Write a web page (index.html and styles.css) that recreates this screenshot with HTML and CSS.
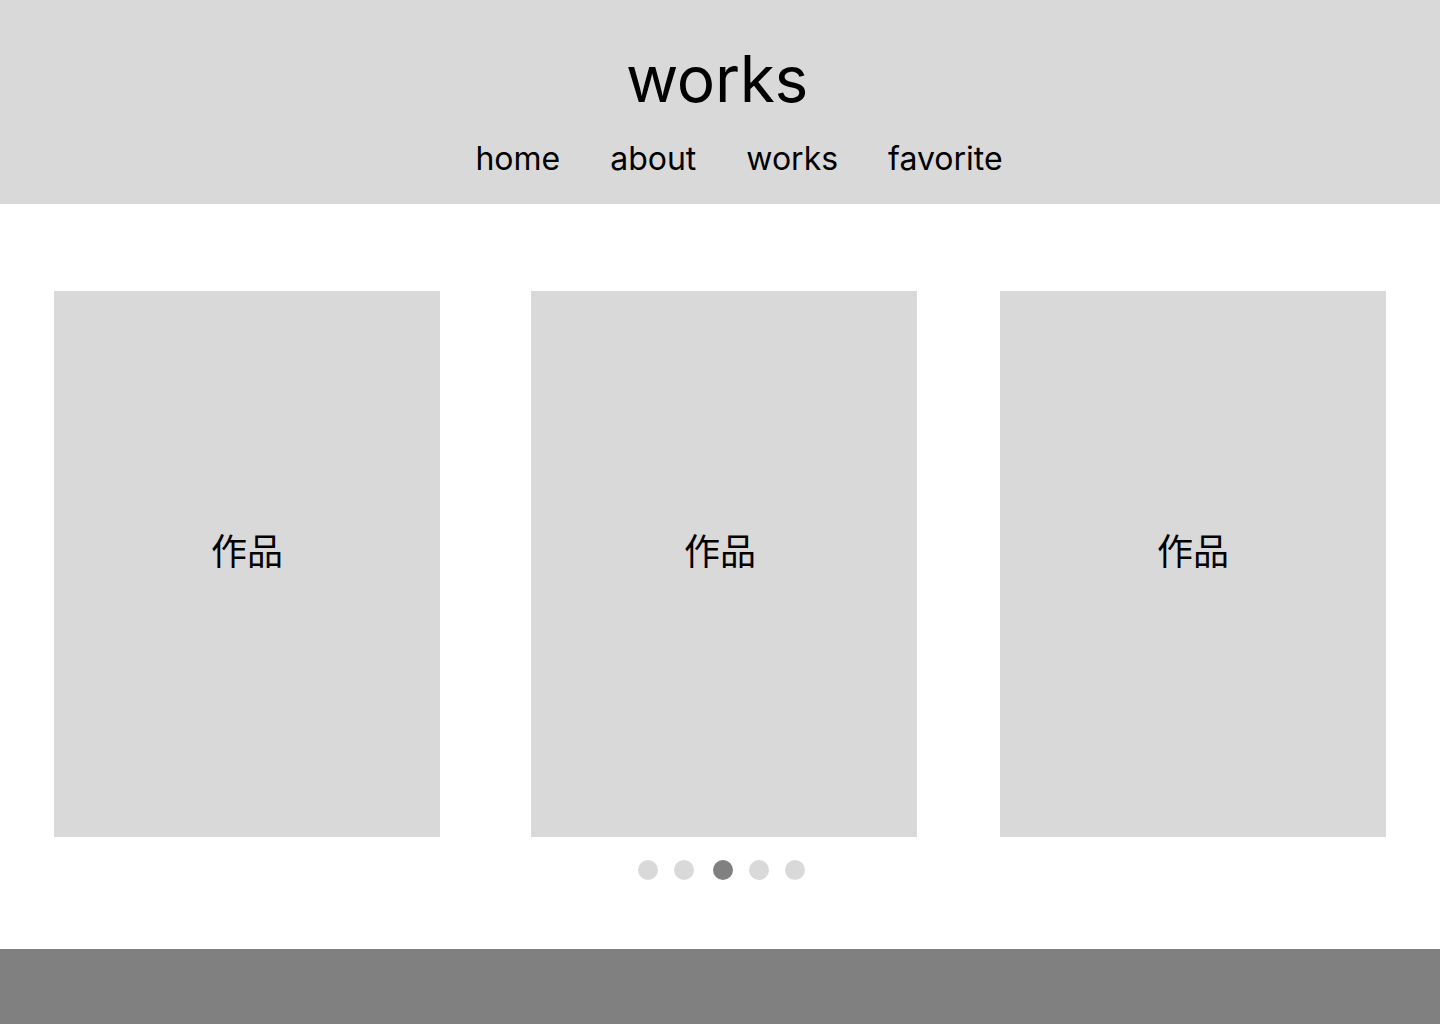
FILE: index.html
```html
<!DOCTYPE html>
<html lang="ja">
<head>
    <meta charset="UTF-8">
    <meta name="viewport" content="width=device-width, initial-scale=1.0">
    <title>works</title>
    <link rel="stylesheet" href="styles.css">
</head>
<body>
    <header class="header">
        <h1 class="title">works</h1>
        <nav class="nav">
            <a href="#">home</a>
            <a href="#">about</a>
            <a href="#">works</a>
            <a href="#">favorite</a>
        </nav>
    </header>
    <main class="content">
        <div class="cards">
            <div class="card">作品</div>
            <div class="card">作品</div>
            <div class="card">作品</div>
        </div>
        <div class="dots">
            <span class="dot"></span>
            <span class="dot"></span>
            <span class="dot active"></span>
            <span class="dot"></span>
            <span class="dot"></span>
        </div>
    </main>
    <footer class="footer"></footer>
</body>
</html>
```

FILE: styles.css
```css
body {
    font-family: 'Inter', 'Noto Sans CJK JP', sans-serif;
    background-color: #FFFFFF;
    color: #000;
    margin: 0;
    padding: 0;
}
.header {
    background-color: #D9D9D9;
    height: 204px;
    box-sizing: border-box;
    padding-top: 40px;
    text-align: center;
}
.title {
    margin: 0;
    padding-right: 6px;
    font-size: 64px;
    font-weight: 400;
    line-height: 77px;
    letter-spacing: -0.3px;
}
.nav {
    display: flex;
    justify-content: center;
    gap: 50px;
    margin-top: 22px;
    padding-left: 38px;
}
.nav a {
    font-size: 32px;
    line-height: 39px;
    color: #000;
    text-decoration: none;
}
.content {
    height: 745px;
    box-sizing: border-box;
    padding: 87px 54px 0;
}
.cards {
    display: flex;
}
.card {
    flex-shrink: 0;
    width: 386px;
    height: 546px;
    background-color: #D9D9D9;
    display: flex;
    align-items: center;
    justify-content: center;
    box-sizing: border-box;
    padding-bottom: 31px;
    font-family: 'Noto Sans CJK JP', sans-serif;
    font-size: 36px;
}
.card:nth-child(2) {
    margin-left: 91px;
    padding-right: 8px;
}
.card:last-child {
    margin-left: auto;
}
.dots {
    display: flex;
    justify-content: center;
    gap: 16px;
    margin-top: 23px;
    padding-left: 2px;
}
.dot {
    width: 20px;
    height: 20px;
    border-radius: 50%;
    background-color: #D9D9D9;
}
.dot.active {
    background-color: #808080;
    margin: 0 0 0 3px;
}
.footer {
    background-color: #808080;
    height: 75px;
}
```
